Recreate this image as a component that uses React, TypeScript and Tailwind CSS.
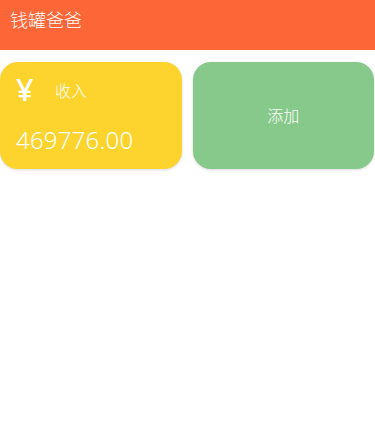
import React from "react";

export default function App() {
  return (
    <div
      className="w-[375px] h-[444px] bg-white font-light"
      style={{ fontFamily: '"Noto Sans", "Noto Sans CJK SC", sans-serif' }}
    >
      <div className="h-[50px] bg-[#fd6636] flex items-start pl-[10px] pt-[5px]">
        <span className="text-white text-[18px] leading-[30px]">钱罐爸爸</span>
      </div>
      <div className="mt-[12px] grid grid-cols-2 gap-[11px] pr-[1px]">
        <div className="h-[107px] rounded-[18px] bg-[#fdd32d] shadow-[0_1px_3px_rgba(0,0,0,0.15)] text-white pl-[16px] pt-[12px]">
          <div className="flex items-center h-[34px]">
            <span className="text-[31px] leading-none w-[39px] font-medium mb-[4px]">¥</span>
            <span className="text-[16px] leading-none">收入</span>
          </div>
          <div className="text-[24px] leading-none mt-[20px] tracking-[0.2px]">469776.00</div>
        </div>
        <div className="h-[107px] rounded-[18px] bg-[#86c98a] shadow-[0_1px_3px_rgba(0,0,0,0.15)] text-white flex items-center justify-center">
          <span className="text-[16px]">添加</span>
        </div>
      </div>
    </div>
  );
}
